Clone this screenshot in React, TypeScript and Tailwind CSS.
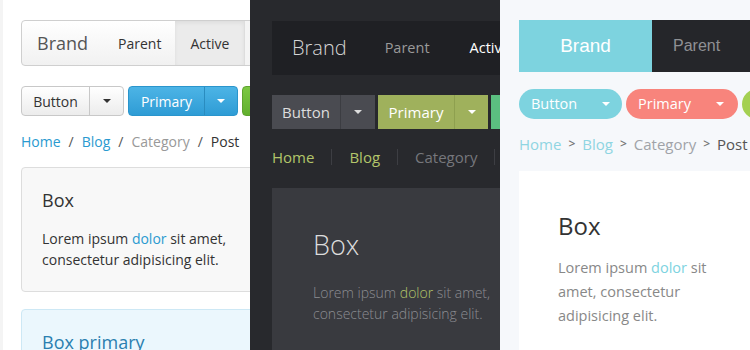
const Caret = ({ className }: { className: string }) => (
  <span className={`inline-block h-0 w-0 border-x-[4px] border-t-[4px] border-x-transparent ${className}`} />
);

const LoremText = ({ dolor }: { dolor: string }) => (
  <>
    Lorem ipsum <span className={dolor}>dolor</span> sit amet, consectetur adipisicing elit.
  </>
);

const ClassicPanel = () => (
  <div className="w-[250px] shrink-0 overflow-hidden bg-white border-l-[3px] border-[#f4f4f4] pl-[18px] pt-[20px] font-['Open_Sans',sans-serif]">
    <div className="w-[400px]">
      <div className="flex h-[46px] items-stretch rounded-[4px] border border-[#cfcfcf] bg-gradient-to-b from-white to-[#f1f1f1]">
        <div className="flex items-center pl-[15px] pr-[16px] text-[18px] text-[#555]">Brand</div>
        <div className="flex items-center px-[14px] text-[14px] text-[#333]">Parent</div>
        <div className="flex w-[70px] items-center justify-center border-r border-[#ddd] bg-[#ebebeb] text-[14px] text-[#333] shadow-[inset_0_2px_4px_rgba(0,0,0,0.06)]">Active</div>
        <div className="w-[10px] bg-[#f4f4f4]" />
      </div>

      <div className="mt-[20px] flex gap-[4px]">
        <div className="flex h-[30px] w-[103px] rounded-[4px] border border-[#c8c8c8] bg-gradient-to-b from-white to-[#ececec] text-[14px] text-[#333]">
          <div className="flex w-[68px] items-center justify-center border-r border-[#c8c8c8]">Button</div>
          <div className="flex flex-1 items-center justify-center"><Caret className="border-t-[#333]" /></div>
        </div>
        <div className="flex h-[30px] w-[110px] rounded-[4px] border border-[#2a95cc] bg-gradient-to-b from-[#4cb4e6] to-[#2e9cd5] text-[14px] text-white">
          <div className="flex w-[76px] items-center justify-center border-r border-[#2a8cbf]">Primary</div>
          <div className="flex flex-1 items-center justify-center"><Caret className="border-t-white" /></div>
        </div>
        <div className="h-[30px] w-[60px] rounded-[4px] border border-[#5ea32e] bg-gradient-to-b from-[#7cc843] to-[#62b02e]" />
      </div>

      <div className="mt-[16px] flex items-center gap-[8px] text-[14px] leading-[20px]">
        <span className="text-[#2a9ad0]">Home</span>
        <span className="text-[#555]">/</span>
        <span className="text-[#2a9ad0]">Blog</span>
        <span className="text-[#555]">/</span>
        <span className="text-[#999]">Category</span>
        <span className="text-[#555]">/</span>
        <span className="text-[#333]">Post</span>
      </div>

      <div className="mt-[15px] h-[125px] w-[260px] rounded-[4px] border border-[#ddd] bg-[#f8f8f8] px-[20px] pt-[20px]">
        <div className="text-[18px] leading-[24px] text-[#333]">Box</div>
        <p className="mt-[16px] w-[215px] text-[14px] leading-[21px] text-[#333]">
          <LoremText dolor="text-[#2a9ad0]" />
        </p>
      </div>

      <div className="mt-[17px] h-[80px] w-[260px] rounded-[4px] border border-[#cde8f5] bg-[#ebf7fd] px-[20px] pt-[20px]">
        <div className="text-[18px] leading-[24px] text-[#2a7fb0]">Box primary</div>
      </div>
    </div>
  </div>
);

const DarkPanel = () => (
  <div className="w-[250px] shrink-0 overflow-hidden bg-[#28292d] pl-[22px] pt-[21px] font-['Open_Sans',sans-serif]">
    <div className="w-[400px]">
      <div className="flex h-[54px] items-center bg-[#1f2024] pl-[20px]">
        <span className="text-[20px] font-light text-[#d6d6d6]">Brand</span>
        <span className="ml-[38px] text-[14.5px] text-[#9a9a9a]">Parent</span>
        <span className="ml-[40px] text-[14.5px] text-white">Active</span>
      </div>

      <div className="mt-[20px] flex gap-[3px]">
        <div className="flex h-[34px] w-[103px] bg-[#4a4b51] text-[15px] text-[#ddd]">
          <div className="flex w-[69px] items-center justify-center border-r border-[#3c3d42]">Button</div>
          <div className="flex flex-1 items-center justify-center"><Caret className="border-t-[#ddd]" /></div>
        </div>
        <div className="flex h-[34px] w-[110px] bg-[#9fb15c] text-[15px] text-white">
          <div className="flex w-[77px] items-center justify-center border-r border-[#8ea04f]">Primary</div>
          <div className="flex flex-1 items-center justify-center"><Caret className="border-t-white" /></div>
        </div>
        <div className="h-[34px] w-[60px] bg-[#5bbf80]" />
      </div>

      <div className="mt-[16px] flex h-[24px] items-center text-[15px]">
        <span className="text-[#b3c56a]">Home</span>
        <span className="mx-[17px] h-[16px] w-px bg-[#3d3e43]" />
        <span className="text-[#b3c56a]">Blog</span>
        <span className="mx-[17px] h-[16px] w-px bg-[#3d3e43]" />
        <span className="text-[#76777c]">Category</span>
        <span className="mx-[17px] h-[16px] w-px bg-[#3d3e43]" />
        <span className="text-[#76777c]">Post</span>
      </div>

      <div className="mt-[19px] h-[180px] w-[260px] bg-[#393a3f] pl-[41px] pt-[40px]">
        <div className="text-[27px] font-light leading-[34px] text-[#dcdcdc]">Box</div>
        <p className="mt-[20px] w-[200px] text-[14px] font-light leading-[21px] text-[#8c8d92]">
          <LoremText dolor="text-[#b3c56a]" />
        </p>
      </div>
    </div>
  </div>
);

const FlatPanel = () => (
  <div className="w-[250px] shrink-0 overflow-hidden bg-[#f6f8fb] pl-[19px] pt-[20px]">
    <div className="w-[400px]">
      <div className="flex h-[52px] font-['Liberation_Sans',sans-serif]">
        <div className="flex w-[133px] items-center justify-center bg-[#7dd3df] text-[19px] text-white">Brand</div>
        <div className="flex items-center bg-[#25262a] pl-[21px] pr-[30px] text-[16px] text-[#8f9094]">Parent</div>
      </div>

      <div className="mt-[17px] flex gap-[4px] font-['Open_Sans',sans-serif]">
        <div className="flex h-[30px] w-[103px] items-center rounded-full bg-[#7dd3df] pl-[12px] pr-[12px] text-[14.5px] text-white">
          <span>Button</span>
          <span className="ml-auto flex"><Caret className="border-t-white" /></span>
        </div>
        <div className="flex h-[30px] w-[112px] items-center rounded-full bg-[#f8847c] pl-[12px] pr-[14px] text-[14.5px] text-white">
          <span>Primary</span>
          <span className="ml-auto flex"><Caret className="border-t-white" /></span>
        </div>
        <div className="h-[30px] w-[60px] rounded-full bg-[#a4d052]" />
      </div>

      <div className="mt-[15px] flex items-center gap-[7px] font-['Open_Sans',sans-serif] text-[15px] leading-[20px]">
        <span className="text-[#8fd5e2]">Home</span>
        <span className="text-[12px] font-semibold text-[#777]">&gt;</span>
        <span className="text-[#8fd5e2]">Blog</span>
        <span className="text-[12px] font-semibold text-[#777]">&gt;</span>
        <span className="text-[#a0a3a8]">Category</span>
        <span className="text-[12px] font-semibold text-[#777]">&gt;</span>
        <span className="text-[#555]">Post</span>
      </div>

      <div className="mt-[17px] h-[180px] w-[260px] bg-white pl-[39px] pt-[39px] font-['Open_Sans',sans-serif]">
        <div className="text-[24px] leading-[32px] text-[#333]">Box</div>
        <p className="mt-[14px] w-[170px] text-[14.5px] leading-[24px] text-[#888]">
          <LoremText dolor="text-[#7dd3df]" />
        </p>
      </div>
    </div>
  </div>
);

export default function App() {
  return (
    <div className="flex h-[350px] w-[750px] overflow-hidden">
      <ClassicPanel />
      <DarkPanel />
      <FlatPanel />
    </div>
  );
}
